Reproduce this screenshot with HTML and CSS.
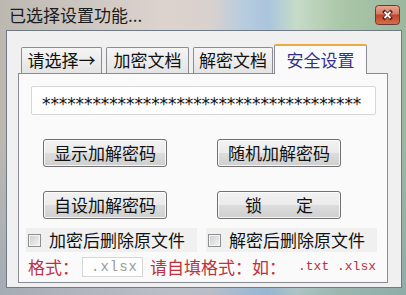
FILE: index.html
```html
<!DOCTYPE html>
<html>
<head>
<meta charset="utf-8">
<link rel="stylesheet" href="styles.css">
</head>
<body>
<div class="window">
  <div class="titlebar">
    <span class="title">已选择设置功能...</span>
    <svg class="close" width="25" height="20" viewBox="0 0 25 20">
      <defs>
        <linearGradient id="cg" x1="0" y1="0" x2="0" y2="1">
          <stop offset="0" stop-color="#e9a893"/>
          <stop offset="0.45" stop-color="#d47a64"/>
          <stop offset="0.5" stop-color="#c0432c"/>
          <stop offset="1" stop-color="#d9704c"/>
        </linearGradient>
      </defs>
      <rect x="0.5" y="0.5" width="24" height="19" rx="3" fill="url(#cg)" stroke="#6b3b33"/>
      <path d="M9.5 7 L15.5 13 M15.5 7 L9.5 13" stroke="#5a2018" stroke-width="3.4" stroke-linecap="square"/>
      <path d="M9.5 7 L15.5 13 M15.5 7 L9.5 13" stroke="#ffffff" stroke-width="1.8"/>
    </svg>
  </div>
  <div class="client">
    <div class="tabs">
      <div class="tab t1">请选择→</div>
      <div class="tab t2">加密文档</div>
      <div class="tab t3">解密文档</div>
      <div class="tab active">安全设置</div>
    </div>
    <div class="panel">
      <div class="pwd">**************************************</div>
      <div class="btn-row">
        <button class="btn" type="button">显示加解密码</button>
        <button class="btn" type="button">随机加解密码</button>
      </div>
      <div class="btn-row">
        <button class="btn" type="button">自设加解密码</button>
        <button class="btn" type="button">锁　　定</button>
      </div>
      <div class="check-row">
        <label class="check"><span class="box"></span>加密后删除原文件</label>
        <label class="check"><span class="box"></span>解密后删除原文件</label>
      </div>
      <div class="fmt-row">
        <span class="red">格式：</span>
        <span class="fmt-input">.xlsx</span>
        <span class="red hint">请自填格式：如：</span>
        <span class="red mono">.txt .xlsx</span>
      </div>
    </div>
  </div>
</div>
</body>
</html>
```
FILE: styles.css
```css
* { box-sizing: border-box; }
body {
  margin: 0;
  width: 406px;
  height: 295px;
  overflow: hidden;
  font-family: "Noto Sans CJK SC", "Noto Sans", sans-serif;
}
.window {
  width: 406px;
  height: 295px;
  display: flex;
  flex-direction: column;
  background:
    linear-gradient(180deg, rgba(255,255,255,0) 45%, rgba(120,150,185,0.35) 100%),
    linear-gradient(90deg, #bcb7b1 0%, #cbc5bf 18%, #dcd3cd 40%, #d9d1ce 52%, #b7cce0 60%, #aac5dd 66%, #c6dbc8 73%, #abc7a8 84%, #9bb89f 100%);
}
.titlebar {
  flex: none;
  height: 30px;
  display: flex;
  align-items: center;
  padding: 0 6px 0 9px;
}
.title {
  font-size: 17px;
  line-height: 20px;
  color: #1c1c1c;
}
.close {
  margin-left: auto;
  display: block;
}
.client {
  margin-left: 6px;
  width: 396px;
  height: 258px;
  border: 1px solid #6f7a85;
  background: #f0f0f0;
  padding: 13px 0 0 11px;
}
.tabs {
  display: flex;
  align-items: flex-end;
  height: 29px;
  padding-left: 3px;
  position: relative;
  z-index: 1;
}
.tab {
  height: 26px;
  border: 1px solid #8b8d93;
  border-bottom: none;
  border-radius: 2px 2px 0 0;
  background: linear-gradient(#f5f5f5, #e4e4e4);
  font-size: 17px;
  line-height: 24px;
  text-align: center;
  color: #111;
  white-space: nowrap;
}
.tab + .tab { margin-left: 4px; }
.t1 { width: 81px; }
.t2 { width: 83px; }
.t3 { width: 80px; }
.tab.active {
  width: 93px;
  margin-left: 1px;
  height: 30px;
  margin-bottom: -1px;
  background: #fafafa;
  border-top: 2px solid #e9ab3f;
  color: #32328c;
  line-height: 27px;
}
.panel {
  width: 370px;
  height: 210px;
  border: 1px solid #898c95;
  background: #fafafa;
}
.pwd {
  margin: 12px 0 0 12px;
  width: 345px;
  height: 29px;
  border: 1px solid #d7d7d7;
  border-radius: 2px;
  background: #fff;
  padding: 8px 0 0 10px;
  font-family: "DejaVu Sans", sans-serif;
  font-size: 17px;
  line-height: 19px;
  color: #111;
  white-space: nowrap;
  overflow: hidden;
  letter-spacing: -0.1px;
}
.btn-row {
  display: flex;
  gap: 50px;
  margin: 24px 0 0 24px;
}
.btn {
  width: 124px;
  height: 28px;
  border: 1px solid #707070;
  border-radius: 3px;
  background: linear-gradient(#f2f2f2 0%, #ebebeb 49%, #dddddd 50%, #cfcfcf 100%);
  box-shadow: inset 0 0 0 1px rgba(255,255,255,0.8);
  font-family: "Noto Sans CJK SC", sans-serif;
  font-size: 17px;
  line-height: 26px;
  color: #111;
  padding: 0;
  text-align: center;
  white-space: nowrap;
}
.check-row {
  display: flex;
  margin: 9px 0 0 7px;
}
.check {
  display: flex;
  align-items: center;
  gap: 8px;
  height: 24px;
  padding: 0 12px 0 2px;
  background: #f0f0f0;
  font-size: 17px;
  line-height: 20px;
  color: #111;
  white-space: nowrap;
}
.check + .check { margin-left: 9px; }
.box {
  width: 13px;
  height: 13px;
  border: 1px solid #8e8f8f;
  background: linear-gradient(135deg, #c9ccd1, #f5f5f5);
  box-shadow: inset 0 0 0 1px #f4f4f4;
}
.fmt-row {
  display: flex;
  align-items: center;
  margin: 5px 0 0 9px;
  height: 20px;
  white-space: nowrap;
}
.red {
  color: #c0303a;
  font-size: 17px;
  line-height: 20px;
}
.fmt-input {
  margin-left: 3px;
  width: 61px;
  height: 20px;
  border: 1px solid #d6d6d6;
  background: #fff;
  font-family: "Liberation Mono", monospace;
  font-size: 14px;
  line-height: 18px;
  color: #9a9a9a;
  padding-left: 8px;
  letter-spacing: 1px;
}
.hint { margin-left: 7px; }
.mono {
  font-family: "Liberation Mono", monospace;
  font-size: 13px;
  margin-left: 12px;
}
```
